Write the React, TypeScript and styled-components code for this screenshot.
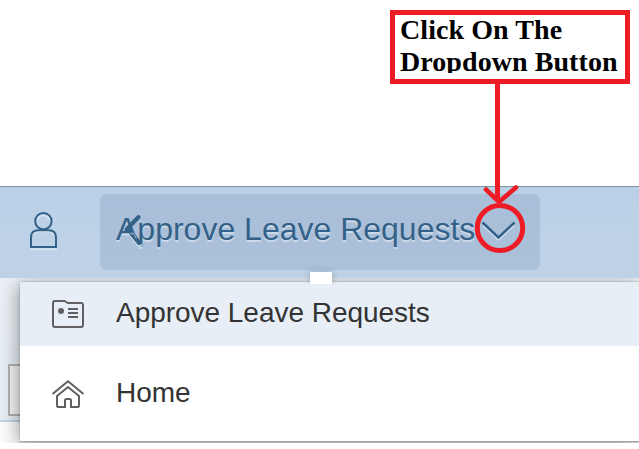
import React from "react";
import styled, { createGlobalStyle } from "styled-components";

const GlobalStyle = createGlobalStyle`
  html, body { margin: 0; padding: 0; background: #fff; }
  body { font-family: "Liberation Sans", Arial, sans-serif; overflow: hidden; }
`;

const Page = styled.div`
  position: relative;
  box-sizing: border-box;
  width: 639px;
  height: 449px;
  padding-top: 186px;
  overflow: hidden;
  background: #fff;
`;

const ShellHeader = styled.header`
  box-sizing: border-box;
  display: flex;
  height: 92px;
  padding: 7px 0 0 29px;
  border-top: 1px solid #7d929f;
  background: linear-gradient(#bad0e6, #bed3e8 80%, #bdd1e4);
`;

const UserIcon = styled.svg`
  flex: none;
  width: 30px;
  height: 40px;
  margin: 17px 41px 0 0;
`;

const TitleButton = styled.div`
  position: relative;
  box-sizing: border-box;
  width: 440px;
  height: 76px;
  padding-left: 16px;
  border-radius: 6px;
  background: linear-gradient(#a9bfd9, #abc1da);
  color: #346187;
  font-size: 32px;
  line-height: 70px;
  text-shadow: 0 2px 0 rgba(255, 255, 255, 0.42);
  white-space: nowrap;
`;

const BackIcon = styled.svg`
  position: absolute;
  left: 18px;
  top: 18px;
  width: 28px;
  height: 38px;
`;

const Content = styled.div`
  position: relative;
  box-sizing: border-box;
  height: 165px;
  padding: 4px 0 0 20px;
  overflow: hidden;
  background: linear-gradient(#ebf1f6, #e8eff5 142px, #c4d6e8 142px, #c4d6e8 144px, #fdfdfd 144px);
`;

const FieldEdge = styled.div`
  position: absolute;
  left: 8px;
  top: 86px;
  width: 20px;
  height: 48px;
  border: 2px solid #b2b2b2;
  background: #f5f5f5;
`;

const Menu = styled.nav`
  position: relative;
  height: 159px;
  border-bottom: 1px solid #a5a5a5;
  background: #fff;
  box-shadow: -2px 3px 18px rgba(0, 0, 0, 0.38), 0 0 2px rgba(0, 0, 0, 0.25);
`;

const MenuItem = styled.div<{ $selected?: boolean }>`
  box-sizing: border-box;
  display: flex;
  align-items: flex-start;
  height: ${(p) => (p.$selected ? 64 : 95)}px;
  padding: ${(p) => (p.$selected ? 15 : 31)}px 0 0 30px;
  background: ${(p) => (p.$selected ? "#e7eef6" : "#fff")};
  color: #333;
  font-size: 28px;
  letter-spacing: -0.03px;
  line-height: 32px;
`;

const ItemIcon = styled.svg`
  flex: none;
  width: 36px;
  height: 36px;
  margin-right: 30px;
`;

const Footer = styled.footer`
  height: 6px;
  background: #fff;
`;

const PopoverArrow = styled.div`
  position: absolute;
  left: 310px;
  top: 272px;
  width: 22px;
  height: 12px;
  background: #fff;
  box-shadow: 0 0 6px rgba(40, 60, 80, 0.3);
  clip-path: inset(-6px -6px 0 -6px);
`;

const Callout = styled.div`
  position: absolute;
  box-sizing: border-box;
  left: 390px;
  top: 10px;
  width: 240px;
  height: 74px;
  padding-left: 5px;
  border: 5px solid #ed1c24;
  background: #fff;
`;

const CalloutText = styled.div`
  height: 58px;
  overflow: hidden;
  color: #000;
  font: bold 28px/32px "Liberation Serif", "Times New Roman", serif;
  letter-spacing: 0.07px;
  white-space: nowrap;
`;

const CalloutLine = styled.span`
  display: block;

  &:first-child {
    margin-top: -1px;
  }
`;

const Pointer = styled.svg`
  position: absolute;
  left: 460px;
  top: 84px;
  width: 80px;
  height: 180px;
`;

export default function App() {
  return (
    <>
      <GlobalStyle />
      <Page>
        <ShellHeader>
          <UserIcon viewBox="0 0 30 40" fill="none">
            <path d="M1 38.2h27" stroke="#dce8f3" strokeWidth="1.3" />
            <path d="M7.8 9.5a6.8 6.8 0 0 1 13 0M4 24q1-3.5 5-3.5h10.5q4.5 0 5.5 3.5" stroke="#dce8f3" strokeWidth="1.3" />
            <g stroke="#346187" strokeWidth="2">
              <circle cx="14.4" cy="10.2" r="8.2" />
              <path d="M2 36v-9.4q0-7.4 7.5-7.4h10q7.5 0 7.5 7.4V36z" />
            </g>
          </UserIcon>
          <TitleButton>
            Approve Leave Requests
            <BackIcon viewBox="0 0 28 38" fill="none">
              <path d="M13 25 20.5 34h2.5v-2" stroke="#d2dfec" strokeWidth="1.5" />
              <path d="M20.5 5 8.5 17.5" stroke="#346187" strokeWidth="4" strokeLinecap="round" />
              <path d="M8.5 16.5 12 15l11 15v2.5l-3 .5-8-10z" fill="#346187" />
              <path d="M12 21.5h3.5l3 5" stroke="#86a3c0" strokeWidth="1.3" />
            </BackIcon>
          </TitleButton>
        </ShellHeader>
        <Content>
          <FieldEdge />
          <Menu>
            <MenuItem $selected>
              <ItemIcon viewBox="0 0 36 36" fill="none" stroke="#606060" strokeWidth="2">
                <path d="M3 6q0-2 2-2h9.5l3.5 2h13q2 0 2 2v20q0 2-2 2H5q-2 0-2-2z" />
                <circle cx="11" cy="14" r="3" fill="#606060" stroke="none" />
                <path d="M18 12h10M18 16h10M18 20h10" />
              </ItemIcon>
              Approve Leave Requests
            </MenuItem>
            <MenuItem>
              <ItemIcon viewBox="0 0 36 36" fill="none" stroke="#606060" strokeWidth="2">
                <path d="M2.5 17 18 4.2 33.5 17" />
                <path d="M7 18.5v10q0 1.5 1.5 1.5H15v-6.5q0-1.5 1.5-1.5h3q1.5 0 1.5 1.5V30h6.5q1.5 0 1.5-1.5v-10M7 19 18 10l11 9" />
              </ItemIcon>
              Home
            </MenuItem>
          </Menu>
        </Content>
        <Footer />
        <PopoverArrow />
        <Callout>
          <CalloutText>
            <CalloutLine>Click On The</CalloutLine>
            <CalloutLine>Dropdown Button</CalloutLine>
          </CalloutText>
        </Callout>
        <Pointer viewBox="0 0 80 180" fill="none">
          <path d="M23 141 38.5 155.5 54 141" stroke="#dce8f3" strokeWidth="2" />
          <path d="M22.5 138.5 38.5 153.5 54.5 138.5" stroke="#346187" strokeWidth="2.5" />
          <g stroke="#ed1c24" strokeWidth="5">
            <path d="M37.5 0v117" />
            <path d="M26 105.5 39 118 56 103.5" strokeWidth="4.6" strokeLinecap="round" />
            <ellipse cx="40" cy="144" rx="22.7" ry="22.5" />
          </g>
        </Pointer>
      </Page>
    </>
  );
}
